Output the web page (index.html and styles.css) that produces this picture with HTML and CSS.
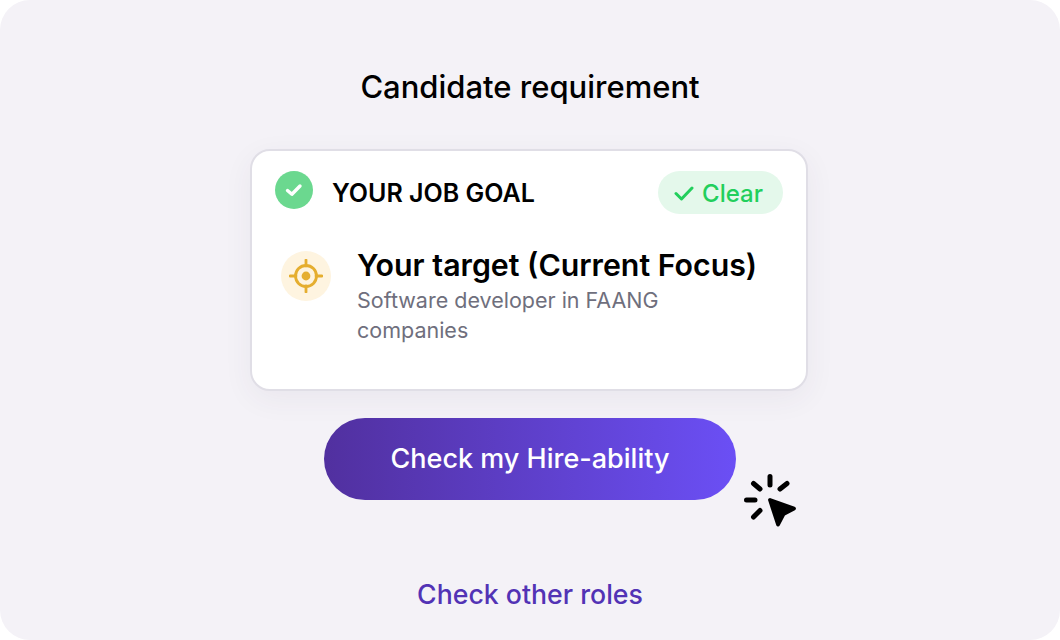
FILE: index.html
```html
<!DOCTYPE html>
<html lang="en">
<head>
    <meta charset="UTF-8">
    <title>Candidate requirement</title>
    <link rel="stylesheet" href="styles.css">
</head>
<body>
    <div class="panel">
        <h1>Candidate requirement</h1>

        <div class="card">
            <div class="card-head">
                <span class="done-icon">
                    <svg width="22" height="22" viewBox="0 0 22 22"><path d="M4.5 11.5l4.4 3.8L17 7" fill="none" stroke="#fff" stroke-width="3.4" stroke-linecap="round" stroke-linejoin="round"/></svg>
                </span>
                <span class="goal-label">YOUR JOB GOAL</span>
                <span class="clear-pill">
                    <svg width="20" height="16" viewBox="0 0 20 16"><path d="M2 8.5l5.5 5.5L18 3" fill="none" stroke="#22cf5c" stroke-width="3" stroke-linecap="round" stroke-linejoin="round"/></svg>
                    <span class="clear-text">Clear</span>
                </span>
            </div>
            <div class="target">
                <span class="target-icon">
                    <svg width="34" height="34" viewBox="0 0 34 34">
                        <circle cx="17" cy="17" r="10.5" fill="none" stroke="#e5ae2f" stroke-width="2.8"/>
                        <circle cx="17" cy="17" r="4.4" fill="#e5ae2f"/>
                        <path d="M17 1v6M17 27v6M1 17h6M27 17h6" stroke="#e5ae2f" stroke-width="2.8" stroke-linecap="round"/>
                    </svg>
                </span>
                <div class="target-text">
                    <h2>Your target (Current Focus)</h2>
                    <p>Software developer in FAANG companies</p>
                </div>
            </div>
        </div>

        <div class="action">
            <button class="check-btn">Check my Hire-ability</button>
            <svg class="cursor" width="56" height="56" viewBox="0 0 56 56">
                <path d="M28 5.500v8.500M11.500 12.500l6.500 5.500M45 12.500l-7 5.500M4.500 29h8.500M11.500 46l6.500-6.500" stroke="#000" stroke-width="5" stroke-linecap="round" fill="none"/>
                <path d="M28 29l24 8.500-10.500 5.500-5.500 10.500z" fill="#000" stroke="#000" stroke-width="3.800" stroke-linejoin="round"/>
            </svg>
        </div>

        <a class="other-link" href="#">Check other roles</a>
    </div>
</body>
</html>
```

FILE: styles.css
```css
body {
    margin: 0;
    background: #fff;
    font-family: 'Inter', sans-serif;
    color: #000;
}

.panel {
    width: 1060px;
    height: 640px;
    box-sizing: border-box;
    padding-top: 69px;
    background: #f4f2f7;
    border-radius: 30px;
    display: flex;
    flex-direction: column;
    align-items: center;
}

h1 {
    margin: 0 0 44px;
    font-size: 31px;
    line-height: 36px;
    font-weight: 500;
}

.card {
    width: 558px;
    height: 242px;
    box-sizing: border-box;
    margin-right: 2px;
    padding: 20px 23px 0;
    background: #fff;
    border: 2px solid #e0dee6;
    border-radius: 20px;
    box-shadow: 0 8px 30px rgba(60, 50, 90, 0.06);
}

.card-head {
    display: flex;
    align-items: center;
}

.done-icon {
    width: 38px;
    height: 38px;
    margin-top: -5px;
    border-radius: 50%;
    background: #6bd88f;
    display: flex;
    align-items: center;
    justify-content: center;
}

.goal-label {
    margin-left: 19px;
    font-size: 25px;
    font-weight: 600;
    flex: 1;
}

.clear-pill {
    height: 43px;
    padding: 0 20px 0 16px;
    border-radius: 22px;
    background: #e4f8eb;
    color: #22cf5c;
    font-size: 24px;
    font-weight: 500;
    display: flex;
    align-items: center;
    gap: 8px;
}

.clear-text {
    padding-top: 2px;
}

.target {
    display: flex;
    margin-top: 30px;
    padding-left: 6px;
}

.target-icon {
    width: 50px;
    height: 50px;
    margin-top: 7px;
    border-radius: 50%;
    background: #fef4e0;
    display: flex;
    align-items: center;
    justify-content: center;
    flex: none;
}

.target-text {
    margin-left: 26px;
    width: 400px;
    padding-top: 3px;
}

h2 {
    margin: 0;
    font-size: 30.3px;
    line-height: 36px;
    font-weight: 600;
    white-space: nowrap;
}

.target-text p {
    margin: 2px 0 0;
    font-size: 21.5px;
    line-height: 30px;
    color: #6f6f7d;
}

.action {
    position: relative;
    margin-top: 27px;
}

.check-btn {
    display: block;
    width: 412px;
    height: 82px;
    padding: 0 0 2px;
    border: none;
    border-radius: 41px;
    background: linear-gradient(90deg, #51309f, #6b4ff5);
    color: #fff;
    font-family: inherit;
    font-size: 27px;
    font-weight: 500;
}

.cursor {
    position: absolute;
    left: 418px;
    top: 53px;
}

.other-link {
    margin-top: 77px;
    font-size: 26.7px;
    line-height: 34px;
    font-weight: 500;
    color: #5233b5;
    text-decoration: none;
}
```
